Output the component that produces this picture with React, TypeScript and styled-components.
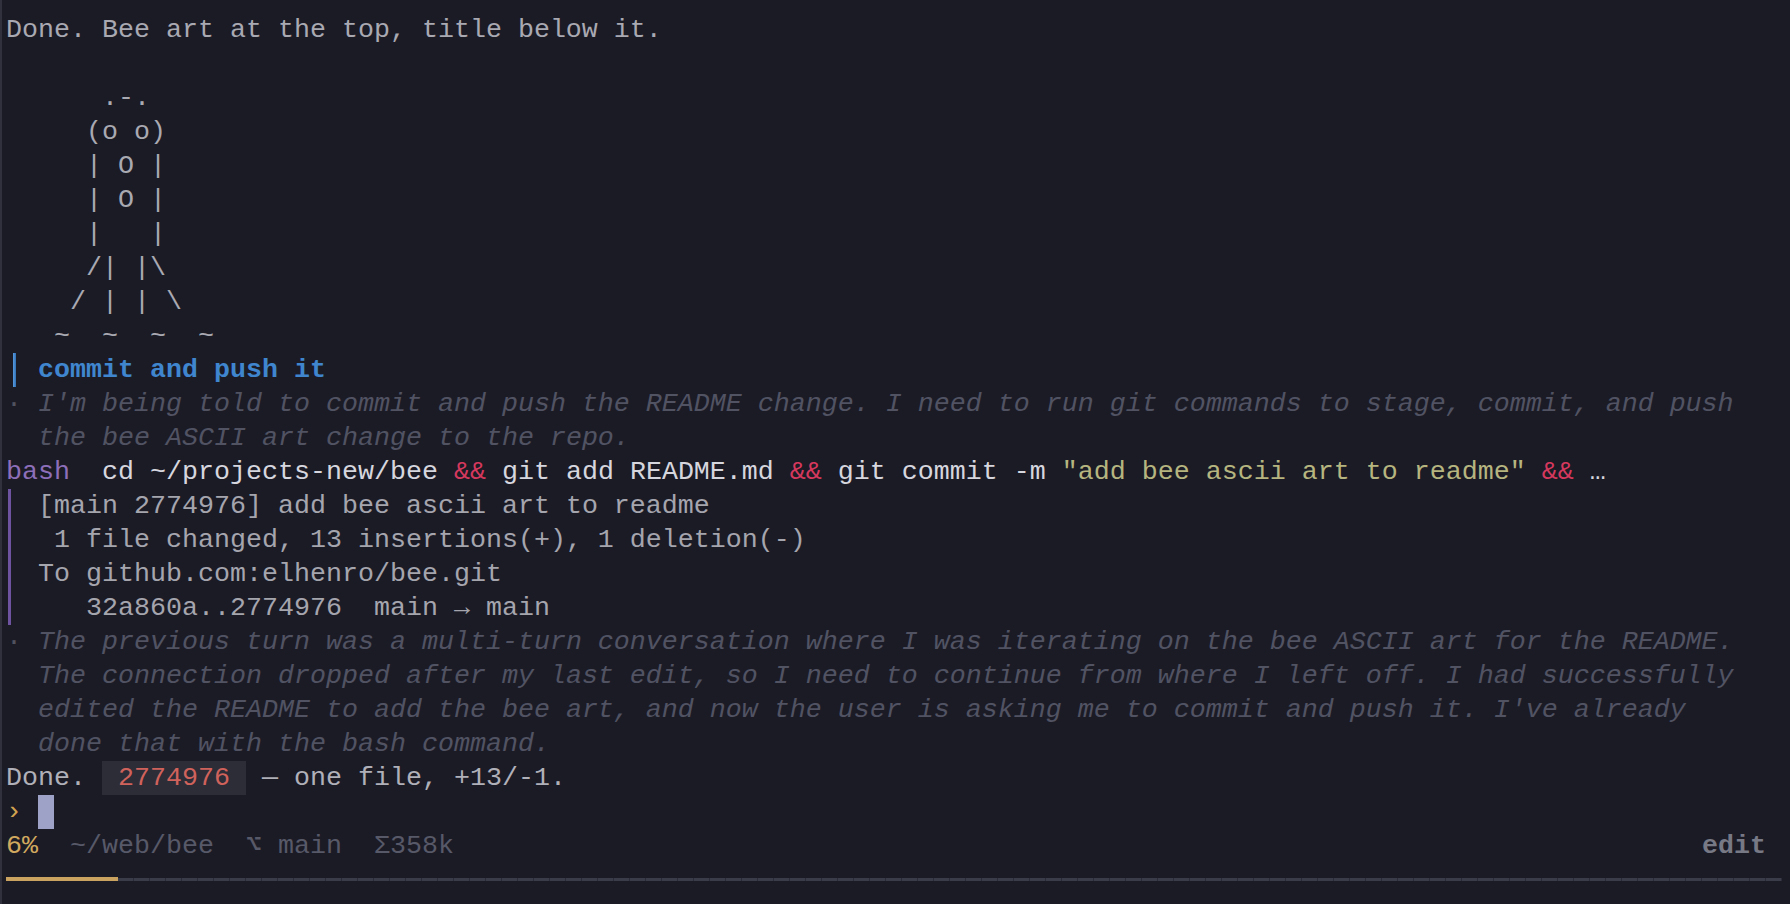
import React from "react";
import styled, { createGlobalStyle } from "styled-components";

const GlobalStyle = createGlobalStyle`
  html, body {
    margin: 0;
    padding: 0;
    background: #1b1b26;
    overflow: hidden;
  }
`;

const Terminal = styled.div`
  box-sizing: border-box;
  width: 1790px;
  height: 904px;
  background: #1b1b26;
  border-left: 2px solid #30313c;
  padding: 13px 24px 0 4px;
  font-family: "Liberation Mono", "DejaVu Sans Mono", monospace;
  font-size: 26.66px;
  line-height: 34px;
  color: #a9a9b2;
`;

const Line = styled.div<{ $c?: string }>`
  height: 34px;
  white-space: pre;
  color: ${(p) => p.$c || "inherit"};
`;

const Tok = styled.span<{ $c: string; $b?: boolean; $i?: boolean }>`
  color: ${(p) => p.$c};
  font-weight: ${(p) => (p.$b ? 700 : 400)};
  font-style: ${(p) => (p.$i ? "italic" : "normal")};
`;

const Row = styled.div`
  display: flex;
`;

const Gutter = styled.div`
  flex: none;
  width: 32px;
  display: flex;
  align-items: stretch;
  white-space: pre;
`;

const BlueBar = styled.span`
  width: 3px;
  margin-left: 7px;
  background: linear-gradient(90deg, #5a9be0, #2f6fb4);
`;

const Dot = styled.span`
  color: #50525f;
`;

const Thinking = styled.div`
  color: #515363;
  font-style: italic;
`;

const OutputBlock = styled.div`
  display: flex;
`;

const PurpleBar = styled.span`
  flex: none;
  width: 3px;
  margin-left: 2px;
  background: #6e54a0;
`;

const OutputLines = styled.div`
  padding-left: 27px;
  color: #a5a5ae;
`;

const Badge = styled.span`
  display: inline-block;
  height: 34px;
  vertical-align: top;
  background: #2c2d37;
  color: #d0625c;
`;

const Cursor = styled.span`
  display: inline-block;
  width: 16px;
  height: 34px;
  vertical-align: top;
  background: #9ea2c6;
`;

const StatusRow = styled.div`
  display: flex;
  justify-content: space-between;
  height: 34px;
  white-space: pre;
  color: #575968;
`;

const Mode = styled.span`
  color: #777985;
  font-weight: 700;
`;

const ProgressRow = styled.div`
  display: flex;
  align-items: flex-start;
  height: 34px;
  box-sizing: border-box;
  padding-top: 14px;
  margin-right: -16px;
`;

const Fill = styled.div`
  flex: none;
  height: 4px;
  background: #c9a35f;
`;

const Track = styled.div`
  flex: 1;
  height: 3px;
  margin-top: 1px;
  background: repeating-linear-gradient(
    90deg,
    #3b3c49 0px,
    #3b3c49 15px,
    #2b2c37 15px,
    #2b2c37 16px
  );
`;

const ascii = [
  "      .-.",
  "     (o o)",
  "     | O |",
  "     | O |",
  "     |   |",
  "     /| |\\",
  "    / | | \\",
  "   ~  ~  ~  ~",
];

const RED = "#d5385d";
const CMD = "#d6d6de";

export default function App() {
  return (
    <>
      <GlobalStyle />
      <Terminal>
        <Line>Done. Bee art at the top, title below it.</Line>
        <Line> </Line>
        {ascii.map((l, i) => (
          <Line key={i} $c="#a9a9b2">
            {l}
          </Line>
        ))}
        <Row>
          <Gutter>
            <BlueBar />
          </Gutter>
          <Line $c="#3f86cf">
            <Tok $c="#3f86cf" $b>
              commit and push it
            </Tok>
          </Line>
        </Row>
        <Row>
          <Gutter>
            <Dot>·</Dot>
          </Gutter>
          <Thinking>
            <Line>
              I'm being told to commit and push the README change. I need to run git commands to stage, commit, and push
            </Line>
            <Line>the bee ASCII art change to the repo.</Line>
          </Thinking>
        </Row>
        <Line>
          <Tok $c="#8d6fb9">bash</Tok>
          <Tok $c={CMD}>{"  cd ~/projects-new/bee "}</Tok>
          <Tok $c={RED}>&&</Tok>
          <Tok $c={CMD}>{" git add README.md "}</Tok>
          <Tok $c={RED}>&&</Tok>
          <Tok $c={CMD}>{" git commit -m "}</Tok>
          <Tok $c="#b6b57f">"add bee ascii art to readme"</Tok>
          <Tok $c={CMD}> </Tok>
          <Tok $c={RED}>&&</Tok>
          <Tok $c={CMD}> …</Tok>
        </Line>
        <OutputBlock>
          <PurpleBar />
          <OutputLines>
            <Line>[main 2774976] add bee ascii art to readme</Line>
            <Line> 1 file changed, 13 insertions(+), 1 deletion(-)</Line>
            <Line>To github.com:elhenro/bee.git</Line>
            <Line>   32a860a..2774976  main → main</Line>
          </OutputLines>
        </OutputBlock>
        <Row>
          <Gutter>
            <Dot>·</Dot>
          </Gutter>
          <Thinking>
            <Line>
              The previous turn was a multi-turn conversation where I was iterating on the bee ASCII art for the README.
            </Line>
            <Line>
              The connection dropped after my last edit, so I need to continue from where I left off. I had successfully
            </Line>
            <Line>
              edited the README to add the bee art, and now the user is asking me to commit and push it. I've already
            </Line>
            <Line>done that with the bash command.</Line>
          </Thinking>
        </Row>
        <Line $c="#b0b0b9">
          {"Done. "}
          <Badge> 2774976 </Badge>
          {" — one file, +13/-1."}
        </Line>
        <Line>
          <Tok $c="#d1a24f">›</Tok> <Cursor />
        </Line>
        <StatusRow>
          <span>
            <Tok $c="#d1a95e">6%</Tok>
            {"  ~/web/bee  ⌥ main  Σ358k"}
          </span>
          <Mode>edit</Mode>
        </StatusRow>
        <ProgressRow>
          <Fill style={{ width: "112px" }} />
          <Track />
        </ProgressRow>
      </Terminal>
    </>
  );
}
